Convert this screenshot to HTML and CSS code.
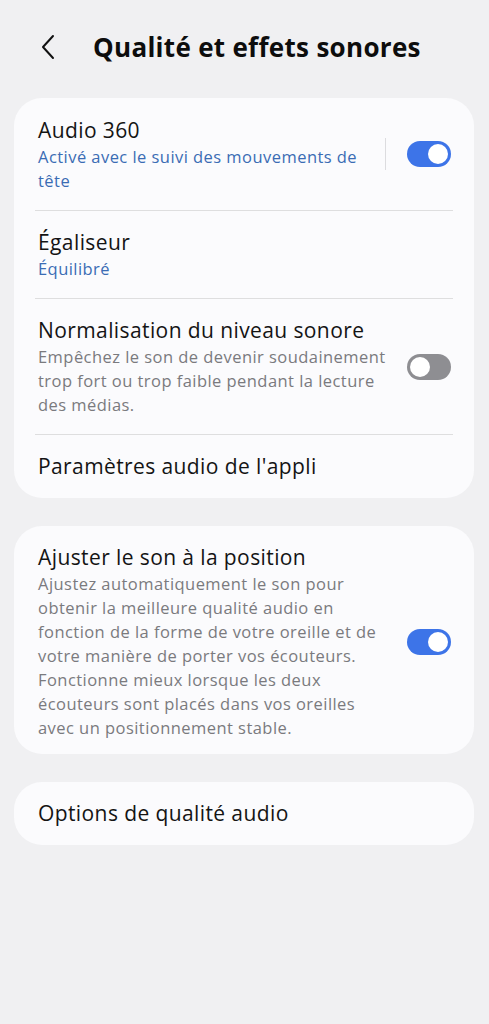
FILE: index.html
```html
<!DOCTYPE html>
<html lang="fr">
<head>
<meta charset="utf-8">
<link rel="stylesheet" href="styles.css">
</head>
<body>
<header class="topbar">
  <svg class="back" width="16" height="26" viewBox="0 0 16 26"><path d="M13 2 L3 13 L13 24" fill="none" stroke="#111" stroke-width="2" stroke-linecap="round" stroke-linejoin="round"/></svg>
  <h1 class="title">Qualité et effets sonores</h1>
</header>
<main class="content">
  <section class="card">
    <div class="row first">
      <div class="text">
        <div class="label">Audio 360</div>
        <div class="sub blue">Activé avec le suivi des mouvements de tête</div>
      </div>
      <div class="vsep"></div>
      <div class="switch on"><span class="thumb"></span></div>
    </div>
    <div class="divider"></div>
    <div class="row">
      <div class="text">
        <div class="label">Égaliseur</div>
        <div class="sub blue">Équilibré</div>
      </div>
    </div>
    <div class="divider"></div>
    <div class="row">
      <div class="text gap">
        <div class="label">Normalisation du niveau sonore</div>
        <div class="sub">Empêchez le son de devenir soudainement trop fort ou trop faible pendant la lecture des médias.</div>
      </div>
      <div class="switch off"><span class="thumb"></span></div>
    </div>
    <div class="divider"></div>
    <div class="row">
      <div class="text">
        <div class="label">Paramètres audio de l'appli</div>
      </div>
    </div>
  </section>
  <section class="card">
    <div class="row tall">
      <div class="text gap">
        <div class="label">Ajuster le son à la position</div>
        <div class="sub">Ajustez automatiquement le son pour obtenir la meilleure qualité audio en fonction de la forme de votre oreille et de votre manière de porter vos écouteurs. Fonctionne mieux lorsque les deux écouteurs sont placés dans vos oreilles avec un positionnement stable.</div>
      </div>
      <div class="switch on"><span class="thumb"></span></div>
    </div>
  </section>
  <section class="card">
    <div class="row">
      <div class="text">
        <div class="label">Options de qualité audio</div>
      </div>
    </div>
  </section>
</main>
</body>
</html>
```
FILE: styles.css
```css
* { box-sizing: border-box; }
html, body { margin: 0; padding: 0; }
body {
  background: #f0f0f2;
  font-family: "Open Sans", "Noto Sans", sans-serif;
  color: #111;
  width: 489px;
  min-height: 1024px;
}
.topbar {
  display: flex;
  align-items: center;
  height: 98px;
  padding: 0 0 4px 40px;
}
.back { flex: none; margin-right: 37px; }
.title {
  margin: 0;
  font-size: 26px;
  font-weight: 700;
  letter-spacing: 0.3px;
  color: #0d0d0d;
}
.content {
  display: flex;
  flex-direction: column;
  gap: 28px;
  padding: 0 15px 0 14px;
}
.card {
  background: #fbfbfd;
  border-radius: 28px;
  padding: 0 21px;
}
.row {
  display: flex;
  align-items: center;
  padding: 17px 2px 17px 3px;
}
.row.first { padding-top: 17.5px; padding-bottom: 17.5px; }
.row.tall { padding-bottom: 14px; }
.text { flex: 1; min-width: 0; }
.text.gap { padding-right: 19px; }
.label {
  font-size: 21px;
  line-height: 29px;
  letter-spacing: 0.4px;
  color: #141414;
}
.sub {
  font-size: 16.5px;
  line-height: 24px;
  letter-spacing: 0.45px;
  color: #7a7a7e;
}
.sub.blue { color: #3a6cb4; }
.vsep {
  flex: none;
  width: 1px;
  height: 32px;
  background: #dcdcdf;
  margin-right: 21px;
}
.divider {
  height: 1px;
  background: #dededf;
}
.switch {
  flex: none;
  width: 44px;
  height: 26px;
  border-radius: 13px;
  position: relative;
}
.switch .thumb {
  position: absolute;
  top: 3px;
  width: 20px;
  height: 20px;
  border-radius: 50%;
  background: #fff;
}
.switch.on { background: #3d74e8; }
.switch.on .thumb { right: 3px; }
.switch.off { background: #8e8e92; }
.switch.off .thumb { left: 3px; }
```
